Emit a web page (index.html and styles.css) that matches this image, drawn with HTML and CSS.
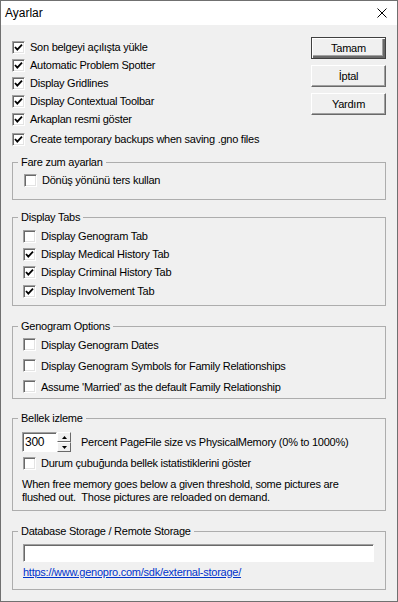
FILE: index.html
```html
<!DOCTYPE html>
<html lang="tr">
<head>
    <meta charset="UTF-8">
    <title>Ayarlar</title>
    <link rel="stylesheet" href="styles.css">
</head>
<body>
    <div class="window">
        <div class="titlebar">
            <span class="title">Ayarlar</span>
            <svg class="close" viewBox="0 0 10 10"><path d="M0.5 0.5 L9.5 9.5 M9.5 0.5 L0.5 9.5" stroke="#000" stroke-width="1" fill="none"/></svg>
        </div>
        <div class="client">
            <div class="top">
                <div class="checklist">
                    <label class="check-row"><span class="box"><svg viewBox="0 0 11 11"><polyline points="2,5 4.3,7.6 9,2.6" /></svg></span>Son belgeyi açılışta yükle</label>
                    <label class="check-row"><span class="box"><svg viewBox="0 0 11 11"><polyline points="2,5 4.3,7.6 9,2.6" /></svg></span>Automatic Problem Spotter</label>
                    <label class="check-row"><span class="box"><svg viewBox="0 0 11 11"><polyline points="2,5 4.3,7.6 9,2.6" /></svg></span>Display Gridlines</label>
                    <label class="check-row"><span class="box"><svg viewBox="0 0 11 11"><polyline points="2,5 4.3,7.6 9,2.6" /></svg></span>Display Contextual Toolbar</label>
                    <label class="check-row"><span class="box"><svg viewBox="0 0 11 11"><polyline points="2,5 4.3,7.6 9,2.6" /></svg></span>Arkaplan resmi göster</label>
                    <label class="check-row last"><span class="box"><svg viewBox="0 0 11 11"><polyline points="2,5 4.3,7.6 9,2.6" /></svg></span>Create temporary backups when saving .gno files</label>
                </div>
                <div class="buttons">
                    <button class="btn btn-default">Tamam</button>
                    <button class="btn">İptal</button>
                    <button class="btn">Yardım</button>
                </div>
            </div>

            <fieldset class="group group-mouse">
                <legend>Fare zum ayarlan</legend>
                <label class="check-row"><span class="box"></span>Dönüş yönünü ters kullan</label>
            </fieldset>

            <fieldset class="group group-tabs">
                <legend>Display Tabs</legend>
                <label class="check-row"><span class="box"></span>Display Genogram Tab</label>
                <label class="check-row"><span class="box"><svg viewBox="0 0 11 11"><polyline points="2,5 4.3,7.6 9,2.6" /></svg></span>Display Medical History Tab</label>
                <label class="check-row"><span class="box"><svg viewBox="0 0 11 11"><polyline points="2,5 4.3,7.6 9,2.6" /></svg></span>Display Criminal History Tab</label>
                <label class="check-row last"><span class="box"><svg viewBox="0 0 11 11"><polyline points="2,5 4.3,7.6 9,2.6" /></svg></span>Display Involvement Tab</label>
            </fieldset>

            <fieldset class="group group-geno">
                <legend>Genogram Options</legend>
                <label class="check-row"><span class="box"></span>Display Genogram Dates</label>
                <label class="check-row"><span class="box"></span>Display Genogram Symbols for Family Relationships</label>
                <label class="check-row"><span class="box"></span>Assume 'Married' as the default Family Relationship</label>
            </fieldset>

            <fieldset class="group group-memory">
                <legend>Bellek izleme</legend>
                <div class="spin-row">
                    <div class="spinner">
                        <span class="num">300</span>
                        <span class="spin">
                            <span class="spin-btn"><svg viewBox="0 0 5 3"><polygon points="0,3 5,3 2.5,0" /></svg></span>
                            <span class="spin-btn"><svg viewBox="0 0 5 3"><polygon points="0,0 5,0 2.5,3" /></svg></span>
                        </span>
                    </div>
                    <span>Percent PageFile size vs PhysicalMemory (0% to 1000%)</span>
                </div>
                <label class="check-row"><span class="box"></span>Durum çubuğunda bellek istatistiklerini göster</label>
                <p class="note">When free memory goes below a given threshold, some pictures are<br>flushed out.&nbsp; Those pictures are reloaded on demand.</p>
            </fieldset>

            <fieldset class="group group-storage">
                <legend>Database Storage / Remote Storage</legend>
                <div class="text-field"></div>
                <a class="link" href="#">https://www.genopro.com/sdk/external-storage/</a>
            </fieldset>
        </div>
    </div>
</body>
</html>
```

FILE: styles.css
```css
body{
    margin: 0;
    background: #f0f0f0;
    font-family: "Liberation Sans", Arial, sans-serif;
    font-size: 11px;
    color: #000;
}
.window{
    width: 398px;
    height: 602px;
    box-sizing: border-box;
    border: 1px solid #707070;
    background: #f0f0f0;
    display: flex;
    flex-direction: column;
}
.titlebar{
    height: 24px;
    flex: none;
    background: #fff;
    display: flex;
    align-items: center;
    padding: 0 10px 0 4px;
}
.title{
    font-size: 12px;
}
.close{
    margin-left: auto;
    width: 10px;
    height: 10px;
}
.client{
    padding: 13px 11px 0 11px;
    letter-spacing: -0.25px;
}

/* top part: checkboxes + dialog buttons */
.top{
    display: flex;
    align-items: flex-start;
}
.checklist{
    display: flex;
    flex-direction: column;
}
.check-row{
    display: flex;
    align-items: center;
    gap: 5px;
    height: 18px;
    white-space: nowrap;
}
.checklist .last{
    margin-top: 2px;
}
.box{
    flex: none;
    width: 13px;
    height: 13px;
    box-sizing: border-box;
    background: #fff;
    border: 1px solid;
    border-color: #a0a0a0 #fff #fff #a0a0a0;
    box-shadow: inset 1px 1px #696969, inset -1px -1px #e3e3e3;
}
.box svg{
    display: block;
    width: 11px;
    height: 11px;
}
.box polyline{
    fill: none;
    stroke: #000;
    stroke-width: 1.8;
}
.buttons{
    margin-left: auto;
    margin-top: -1px;
    display: flex;
    flex-direction: column;
    gap: 6px;
}
.btn{
    width: 75px;
    height: 22px;
    padding: 0;
    font: inherit;
    letter-spacing: inherit;
    color: #000;
    background: #f0f0f0;
    border: 1px solid;
    border-color: #fff #696969 #696969 #fff;
    box-shadow: inset -1px -1px #a0a0a0;
}
.btn-default{
    border-color: #404040;
    box-shadow: inset 1px 1px #fff, inset -2px -2px #696969, inset -3px -3px #a0a0a0;
}

/* group boxes */
.group{
    margin: 0;
    padding: 0 10px;
    min-width: 0;
    border: 1px solid #adadad;
}
.group legend{
    margin-left: -5px;
    padding: 0 3px;
    height: 14px;
    line-height: 14px;
}
.group-mouse{
    margin-top: 7px;
    padding: 2px 10px 10px 11px;
}
.group-mouse legend{
    margin-left: -6px;
}
.group-tabs{
    margin-top: 10px;
    padding-top: 3px;
    padding-bottom: 5px;
}
.group-tabs .last{
    margin-top: 1px;
}
.group-geno{
    margin-top: 13px;
    padding-top: 1px;
    padding-bottom: 1px;
}
.group-geno .check-row{
    height: 21px;
}
.group-memory{
    margin-top: 12px;
    padding-top: 7px;
    padding-bottom: 6px;
}
.spin-row{
    display: flex;
    align-items: center;
    gap: 10px;
    height: 20px;
    margin-left: -1px;
    white-space: nowrap;
}
.spinner{
    display: flex;
}
.num{
    width: 35px;
    height: 20px;
    box-sizing: border-box;
    padding-left: 2px;
    display: flex;
    align-items: center;
    background: #fff;
    border: 1px solid;
    border-color: #a0a0a0 #fff #fff #a0a0a0;
    box-shadow: inset 1px 1px #696969;
    font-size: 12px;
}
.spin{
    width: 14px;
    height: 20px;
    display: flex;
    flex-direction: column;
    background: #fff;
}
.spin-btn{
    flex: 1;
    display: flex;
    align-items: center;
    justify-content: center;
    background: #f0f0f0;
    border: 1px solid;
    border-color: #fff #696969 #696969 #fff;
}
.spin-btn svg{
    width: 5px;
    height: 3px;
    fill: #000;
}
.group-memory .check-row{
    margin-top: 2px;
}
.note{
    margin: 6px 0 0 -1px;
    line-height: 13px;
}
.group-storage{
    margin-top: 13px;
    padding-top: 6px;
    padding-bottom: 10px;
}
.text-field{
    width: 351px;
    height: 18px;
    box-sizing: border-box;
    background: #fff;
    border: 1px solid;
    border-color: #a0a0a0 #fff #fff #a0a0a0;
    box-shadow: inset 1px 1px #696969;
}
.link{
    display: block;
    margin-top: 4px;
    line-height: 13px;
    color: #0033cc;
}
```
